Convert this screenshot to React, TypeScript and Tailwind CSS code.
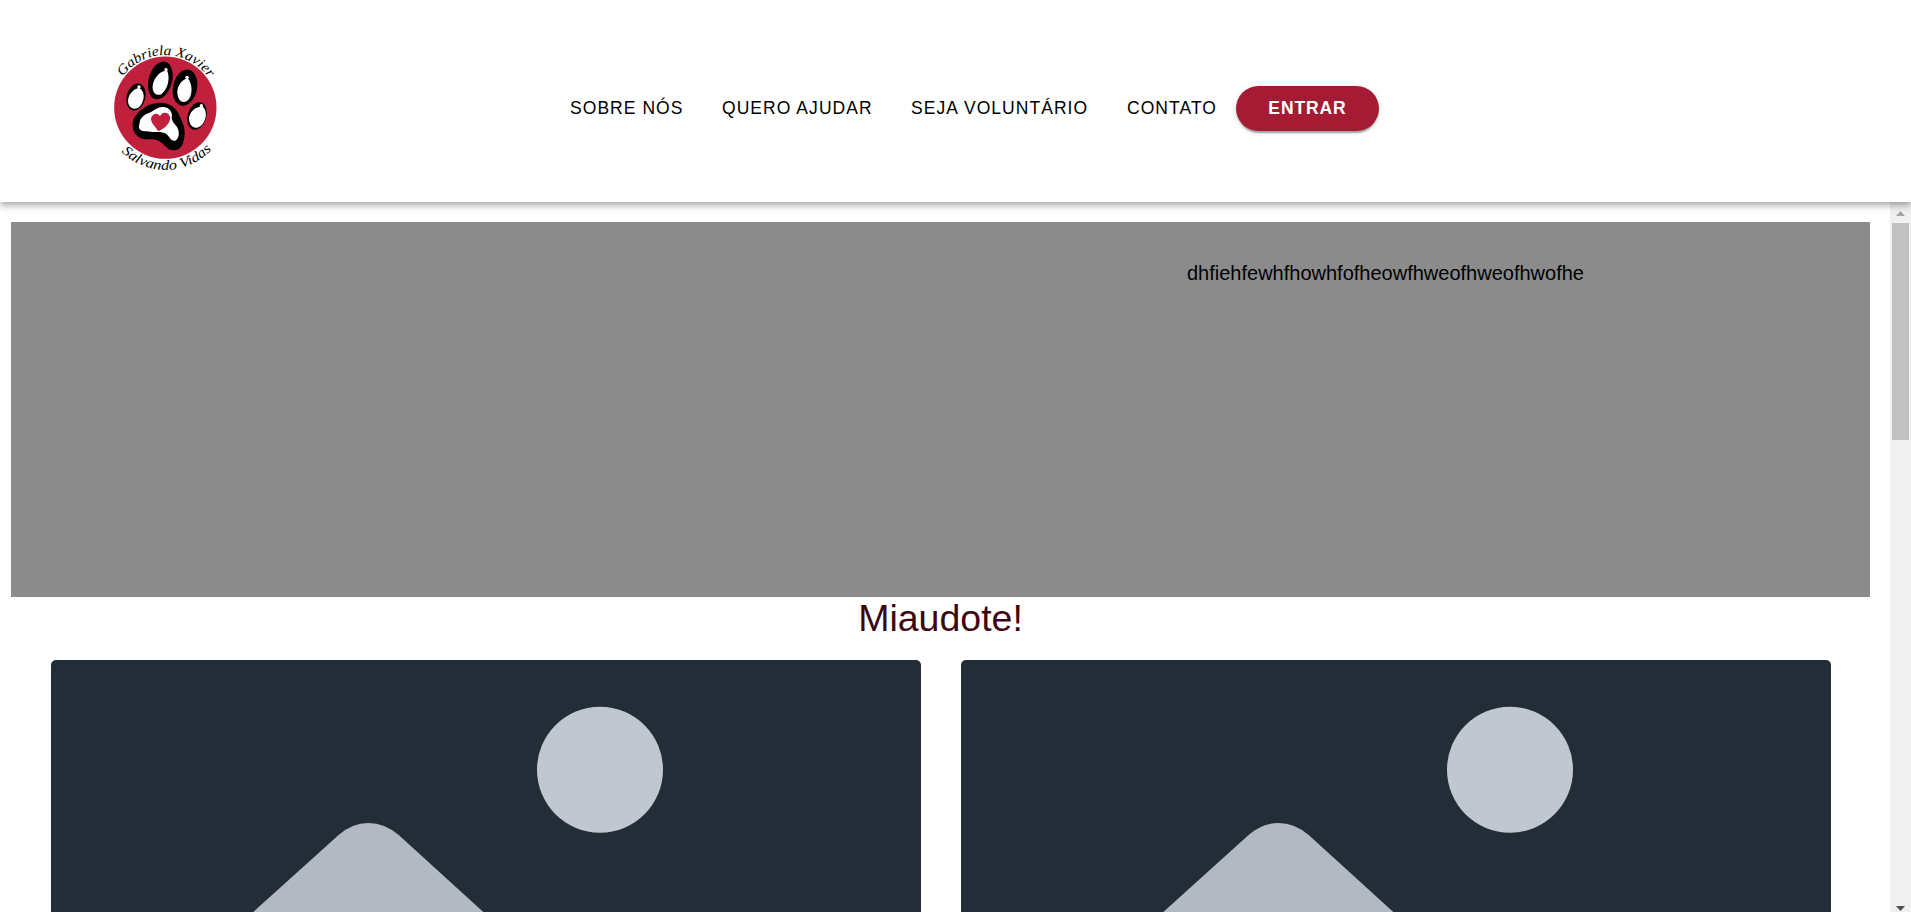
const links = [
  { label: "SOBRE NÓS", width: "w-[152px]" },
  { label: "QUERO AJUDAR", width: "w-[189px]" },
  { label: "SEJA VOLUNTÁRIO", width: "w-[216px]" },
  { label: "CONTATO", width: "w-[109px]" },
];

function Logo() {
  return (
    <svg viewBox="0 0 390 435" className="ml-[100px] h-[145px] w-[130px] shrink-0">
      <defs>
        <path id="arc-top" d="M68 125A158 158 0 0 1 331 137" />
        <path id="arc-bottom" d="M64 350A187 187 0 0 0 341 336" />
      </defs>
      <circle cx="196" cy="218" r="153.5" fill="#c0203c" />
      <g fill="#000">
        <ellipse cx="108" cy="186" rx="28" ry="41" transform="rotate(15 108 186)" />
        <ellipse cx="181" cy="136" rx="35" ry="58" transform="rotate(15 181 136)" />
        <ellipse cx="255" cy="158" rx="36" ry="55" transform="rotate(12 255 158)" />
        <ellipse cx="291" cy="243" rx="28" ry="42" transform="rotate(17 291 243)" />
        <path d="M179 203C205 202 226 215 236 236C243 254 254 268 254 293C254 322 244 345 222 346C202 347 196 329 177 318C159 309 143 316 127 311C107 305 96 285 98 266C100 235 138 205 179 203Z" />
      </g>
      <g fill="#fff">
        <path d="M119 160C138 171 133 205 115 218C98 228 83 214 84 196C86 177 101 162 114 160Z" />
        <path d="M199 103C213 124 204 163 185 177C168 186 156 170 158 152C161 130 178 110 195 107Z" />
        <path d="M263 128C280 150 278 186 260 199C241 208 231 188 232 169C234 149 246 136 258 131Z" />
        <path d="M304 212C323 222 322 255 302 273C284 287 266 271 267 249C269 231 284 217 300 215Z" />
        <circle cx="117" cy="156" r="5" />
        <circle cx="198" cy="104" r="5" />
        <circle cx="261" cy="127" r="5" />
        <circle cx="304" cy="212" r="5" />
        <path d="M119 263C120 247 137 237 152 232C164 224 177 214 190 216C205 217 215 228 216 240C213 253 219 263 229 273C239 286 240 309 226 317C213 320 209 306 200 298C188 288 169 292 157 291C146 287 120 293 117 278C116 272 118 269 119 263Z" />
      </g>
      <path d="M175 289C167 276 153 264 153 252C154 237 173 229 180 244C187 228 207 231 210 246C213 262 196 280 175 289Z" fill="#c0203c" />
      <g fill="#000" fontFamily="'Liberation Serif', serif" fontStyle="italic" fontSize="42">
        <text>
          <textPath href="#arc-top" textLength="301" lengthAdjust="spacingAndGlyphs">Gabriela Xavier</textPath>
        </text>
        <text>
          <textPath href="#arc-bottom" textLength="303" lengthAdjust="spacingAndGlyphs">Salvando Vidas</textPath>
        </text>
      </g>
    </svg>
  );
}

function Header() {
  return (
    <header className="relative z-10 flex h-[202px] shrink-0 bg-white pt-[35px] shadow-[0_2px_5px_-1px_rgba(0,0,0,0.2),0_5px_6px_0_rgba(0,0,0,0.14),0_1px_12px_0_rgba(0,0,0,0.12)]">
      <Logo />
      <nav className="ml-[340px] mt-[51px] flex h-[45px] items-center text-[17.5px] leading-[44px] tracking-[1.05px]">
        {links.map((link) => (
          <a key={link.label} className={`${link.width} h-[45px] whitespace-nowrap`}>
            {link.label}
          </a>
        ))}
        <button className="h-[45px] w-[143px] rounded-full bg-[#a61b34] pb-px font-bold tracking-[0.9px] text-white shadow-[0_4px_1px_-2px_rgba(0,0,0,0.2),0_2px_2px_0_rgba(0,0,0,0.14),0_1px_6px_0_rgba(0,0,0,0.12)]">
          ENTRAR
        </button>
      </nav>
    </header>
  );
}

function Placeholder() {
  return (
    <svg viewBox="0 0 870 252" className="h-[252px] w-[870px] rounded-t-[5px] bg-[#222d38]">
      <circle cx="549" cy="109.7" r="63" fill="#c1c7ce" />
      <path d="M202.3 252L287.3 175.3Q301 163 317.3 163Q334 163 348 175.3L432.3 252Z" fill="#b3b9c1" />
    </svg>
  );
}

function Scrollbar() {
  return (
    <div className="flex w-[21px] shrink-0 flex-col items-center bg-[#f0f0f0]">
      <svg viewBox="0 0 21 21" className="h-[21px] w-[21px]">
        <path d="M6 14L10.5 9L15 14Z" fill="#a3a3a3" />
      </svg>
      <div className="h-[217px] w-[17px] bg-[#c1c1c1]" />
      <svg viewBox="0 0 21 21" className="mt-auto h-[21px] w-[21px]">
        <path d="M6 15L15 15L10.5 20Z" fill="#505050" />
      </svg>
    </div>
  );
}

export default function App() {
  return (
    <div className="flex h-[912px] w-full flex-col overflow-hidden bg-white font-['Liberation_Sans',Arial,sans-serif] text-black">
      <Header />
      <div className="flex min-h-0 flex-1">
        <main className="flex-1 pl-[11px] pr-5 pt-5">
          <section className="flex h-[375px] bg-[#8b8b8b] pl-[1176px] pt-[36px] text-[20px] leading-[30px]">
            <p>dhfiehfewhfhowhfofheowfhweofhweofhwofhe</p>
          </section>
          <h1 className="h-[63px] text-center text-[37.5px] leading-[43px] text-[#3d0711]">Miaudote!</h1>
          <div className="flex justify-center gap-10">
            <Placeholder />
            <Placeholder />
          </div>
        </main>
        <Scrollbar />
      </div>
    </div>
  );
}
